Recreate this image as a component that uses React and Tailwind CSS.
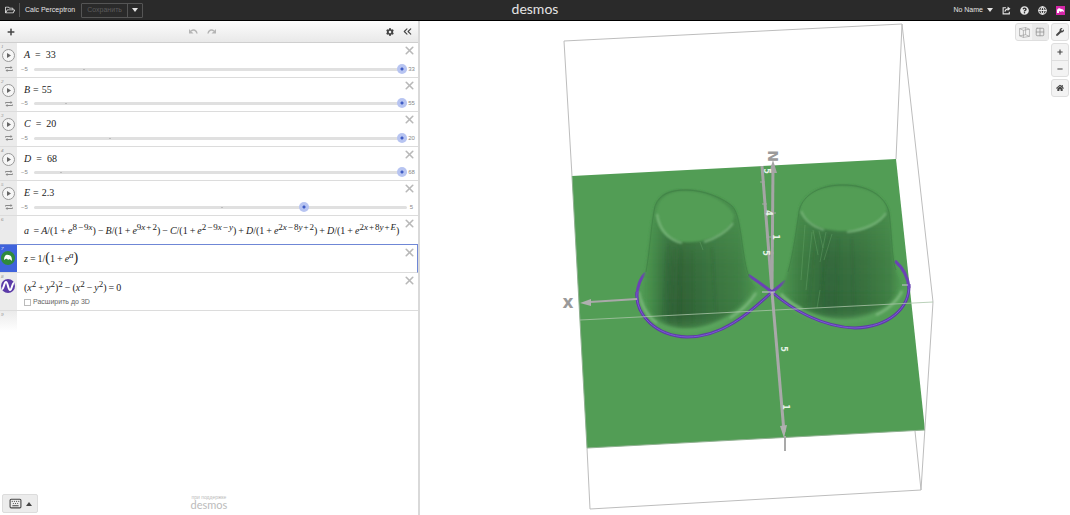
import React, { useState } from 'react';
import { ChevronsLeft, Globe, Grid2x2, Keyboard, X } from 'lucide-react';
import { FaCog, FaHome, FaMinus, FaPlus, FaQuestionCircle, FaRegFolderOpen, FaWrench } from 'react-icons/fa';

const sliders = [
  { name: 'A', value: 33, max: 33, wide: true },
  { name: 'B', value: 55, max: 55, wide: false },
  { name: 'C', value: 20, max: 20, wide: true },
  { name: 'D', value: 68, max: 68, wide: true },
  { name: 'E', value: 2.3, max: 5, wide: false },
];

// Math helpers
const Op = ({ children }) => <span className="mx-[2px]">{children}</span>;
const SOp = ({ children }) => <span className="mx-px">{children}</span>;
const Sup = ({ children }) => <span className="relative -top-1 text-[9px]">{children}</span>;

function Caret({ up = false }) {
  return (
    <svg viewBox="0 0 6 4" className="w-[6px] h-1" fill="currentColor">
      <path d={up ? 'M0 4L3 0L6 4Z' : 'M0 0H6L3 4Z'} />
    </svg>
  );
}

function Header() {
  return (
    <header className="h-[21px] shrink-0 bg-[#2a2a2a] border-b border-black text-[#e4e4e4] text-[7px] grid grid-cols-3 items-center">
      <div className="flex items-center pl-[5px]">
        <button aria-label="Open"><FaRegFolderOpen size={10} /></button>
        <span className="w-px h-[14px] bg-[#555] ml-1 mr-[5px]" />
        <h1 className="whitespace-nowrap">Calc Perceptron</h1>
        <div className="flex h-[15px] ml-[6px] border border-[#555] rounded-[1px]">
          <button className="px-[5px] text-[#5c5c5c] border-r border-[#555]">Сохранить</button>
          <button className="w-[14px] flex items-center justify-center" aria-label="Save options"><Caret /></button>
        </div>
      </div>
      <a href="#" className="justify-self-center text-[14px] leading-none font-['Lato',sans-serif] pb-[2px]">desmos</a>
      <div className="flex items-center justify-end gap-[9px] pr-[5px]">
        <button className="flex items-center gap-1">No Name <Caret /></button>
        <button aria-label="Share">
          <svg viewBox="0 0 16 16" className="w-[9px] h-[9px]" fill="none" stroke="currentColor" strokeWidth="2">
            <path d="M7 3H2V14H13V10M5 10C6 7 8 5 12 5" />
            <path d="M10 1L15 5L10 9Z" fill="currentColor" stroke="none" />
          </svg>
        </button>
        <button aria-label="Help"><FaQuestionCircle size={9} /></button>
        <button aria-label="Language"><Globe size={9} strokeWidth={3} /></button>
        <button aria-label="Account" className="w-[9px] h-[9px] bg-[#d427a8]">
          <svg viewBox="0 0 9 9" className="w-[9px] h-[9px]">
            <path d="M1 7V4C2 2 4 2 5 3C7 3 8 4 8 6L6 5L5 6L3 5V7Z" fill="#fff" />
          </svg>
        </button>
      </div>
    </header>
  );
}

function Toolbar() {
  return (
    <div className="h-[22px] shrink-0 flex items-center justify-between bg-gradient-to-b from-[#fcfcfc] to-[#e9e9e9] border-b border-[#cfcfcf] pl-[7px] pr-1 text-[#444]">
      <button aria-label="Add item" className="w-3"><FaPlus size={8} /></button>
      <div className="flex gap-[9px] text-[#b5b5b5]">
        <button aria-label="Undo">
          <svg viewBox="0 0 18 14" className="w-[9px] h-[7px]" fill="none" stroke="currentColor" strokeWidth="3">
            <path d="M4 6C9 2 15 4 16 11" /><path d="M0 2V11H9Z" fill="currentColor" stroke="none" />
          </svg>
        </button>
        <button aria-label="Redo">
          <svg viewBox="0 0 18 14" className="w-[9px] h-[7px]" fill="none" stroke="currentColor" strokeWidth="3">
            <path d="M14 6C9 2 3 4 2 11" /><path d="M18 2V11H9Z" fill="currentColor" stroke="none" />
          </svg>
        </button>
      </div>
      <div className="flex items-center gap-[7px]">
        <button aria-label="Settings"><FaCog size={8} /></button>
        <button aria-label="Hide list"><ChevronsLeft size={13} strokeWidth={2} /></button>
      </div>
    </div>
  );
}

function Gutter({ index, className = 'bg-[#ebebeb] text-[#888]', children }) {
  return (
    <div className={`w-[17px] shrink-0 flex flex-col ${className}`}>
      <span className="pl-px pt-px text-[5px] leading-[5px] italic">{index}</span>
      {children}
    </div>
  );
}

function CloseButton() {
  return (
    <button aria-label="Delete" className="shrink-0 self-start pt-px text-[#b8b8b8]">
      <X size={13} strokeWidth={3} />
    </button>
  );
}

function SliderRow({ index, name, value: initial, max, wide }) {
  const [value, setValue] = useState(initial);
  const zero = (5 / (max + 5)) * 100;
  return (
    <li className="flex border-b border-[#dcdcdc]">
      <Gutter index={index}>
        <button aria-label={`Play ${name}`} className="w-[13px] h-[13px] ml-[2px] rounded-full border border-[#999] bg-[#f6f6f6] flex items-center justify-center text-[#666]">
          <svg viewBox="0 0 5 5" className="w-[5px] h-[5px]" fill="currentColor"><path d="M1 0L5 2.5L1 5Z" /></svg>
        </button>
        <svg viewBox="0 0 16 12" className="w-2 h-[6px] ml-[5px] mt-1 text-[#8a8a8a]" fill="none" stroke="currentColor" strokeWidth="2">
          <path d="M1 5V3H12M15 7V9H4" />
          <path d="M11 0L15 3L11 6ZM5 6L1 9L5 12Z" fill="currentColor" stroke="none" />
        </svg>
      </Gutter>
      <div className="flex-1 pl-1 pr-[2px]">
        <div className="flex justify-between h-5">
          <label htmlFor={`slider-${name}`} className={`pl-[3px] pt-1 leading-4 flex ${wide ? 'gap-[5px]' : 'gap-[3px]'}`}>
            <i>{name}</i><span>=</span><span>{value}</span>
          </label>
          <CloseButton />
        </div>
        <div className="flex items-center h-3 text-[6px] text-[#888] font-['Liberation_Sans',sans-serif]">
          <span className="w-[13px]">−5</span>
          <div className="relative flex-1 flex items-center">
            <input
              id={`slider-${name}`}
              type="range"
              min={-5}
              max={max}
              step={0.1}
              value={value}
              onChange={(e) => setValue(Number(e.target.value))}
              className="w-full h-[10px] appearance-none bg-transparent [&::-webkit-slider-runnable-track]:h-[3px] [&::-webkit-slider-runnable-track]:rounded-full [&::-webkit-slider-runnable-track]:bg-[#e0e0e0] [&::-webkit-slider-thumb]:appearance-none [&::-webkit-slider-thumb]:w-[10px] [&::-webkit-slider-thumb]:h-[10px] [&::-webkit-slider-thumb]:-mt-1 [&::-webkit-slider-thumb]:rounded-full [&::-webkit-slider-thumb]:bg-[radial-gradient(circle,#3f5cc4_0px,#3f5cc4_1px,#b7c4f1_2px)]"
            />
            <span className="absolute w-[2px] h-px bg-[#bdbdbd]" style={{ left: `${zero}%` }} />
          </div>
          <span className="w-[9px] text-center">{max}</span>
        </div>
      </div>
    </li>
  );
}

function Sidebar() {
  return (
    <aside className="w-[420px] shrink-0 flex flex-col bg-white border-r-2 border-[#d9d9d9]">
      <Toolbar />
      <div className="flex-1 flex flex-col text-[10px] text-[#222] font-['Liberation_Serif',serif]">
        <ul className="grid grid-rows-5 h-[173px]">
          {sliders.map((s, i) => <SliderRow key={s.name} index={i + 1} {...s} />)}
        </ul>
        <ul>
          <li className="h-7 flex justify-between pr-[2px]">
            <Gutter index={6} />
            <div className="flex-1 min-w-0 pl-[7px] pt-[7px] leading-4 whitespace-nowrap">
              <i>a</i> <Op>=</Op><i>A</i>/(1<Op>+</Op><i>e</i><Sup>8<SOp>−</SOp>9<i>x</i></Sup>)<Op>−</Op>
              <i>B</i>/(1<Op>+</Op><i>e</i><Sup>9<i>x</i><SOp>+</SOp>2</Sup>)<Op>−</Op>
              <i>C</i>/(1<Op>+</Op><i>e</i><Sup>2<SOp>−</SOp>9<i>x</i><SOp>−</SOp><i>y</i></Sup>)<Op>+</Op>
              <i>D</i>/(1<Op>+</Op><i>e</i><Sup>2<i>x</i><SOp>−</SOp>8<i>y</i><SOp>+</SOp>2</Sup>)<Op>+</Op>
              <i>D</i>/(1<Op>+</Op><i>e</i><Sup>2<i>x</i><SOp>+</SOp>8<i>y</i><SOp>+</SOp><i>E</i></Sup>)
            </div>
            <CloseButton />
          </li>
          <li className="h-[29px] flex border border-l-0 border-b-[#dcdcdc] border-t-[#6f87d6] border-r-[#6f87d6] pr-px">
            <Gutter index={7} className="bg-[#3f63dc] text-white">
              <svg viewBox="0 0 14 14" className="w-[14px] h-[14px] ml-px" fill="none">
                <circle cx="7" cy="7" r="7" fill="#2f8a3c" />
                <path d="M3 9C3 5 5 3 7 4C10 4 11 6 11 10C9 8 8 8 7 9C6 7 5 8 3 9Z" fill="#fff" />
              </svg>
            </Gutter>
            <div className="flex-1 pl-[7px] pt-[6px] leading-4">
              <i>z</i><Op>=</Op>1/<span className="text-[14px] leading-none">(</span>1<Op>+</Op><i>e</i><Sup><i>a</i></Sup><span className="text-[14px] leading-none">)</span>
            </div>
            <CloseButton />
          </li>
          <li className="h-[38px] flex border-b border-[#dcdcdc] pr-[2px]">
            <Gutter index={8}>
              <svg viewBox="0 0 14 14" className="w-[14px] h-[14px] ml-px">
                <circle cx="7" cy="7" r="7" fill="#5b3aa8" />
                <path d="M1 10C3 10 3 3 5 3C7 3 7 11 9 11C11 11 11 4 13 4" fill="none" stroke="#fff" strokeWidth="2" />
              </svg>
            </Gutter>
            <div className="flex-1 pl-[7px] pt-[7px]">
              <div className="leading-4">
                (<i>x</i><Sup>2</Sup><Op>+</Op><i>y</i><Sup>2</Sup>)<Sup>2</Sup><Op>−</Op>(<i>x</i><Sup>2</Sup><Op>−</Op><i>y</i><Sup>2</Sup>)<Op>=</Op>0
              </div>
              <label className="flex items-center gap-[2px] h-3 text-[7px] text-[#666] font-['Liberation_Sans',sans-serif]">
                <input type="checkbox" className="appearance-none w-[7px] h-[7px] border border-[#bbb] bg-white" />
                Расширить до 3D
              </label>
            </div>
            <CloseButton />
          </li>
          <li className="h-5 flex">
            <Gutter index={9} className="bg-gradient-to-b from-[#ebebeb] to-white text-[#888]" />
          </li>
        </ul>
        <footer className="mt-auto h-[21px] grid grid-cols-3 items-start font-['Liberation_Sans',sans-serif]">
          <button aria-label="Keyboard" className="ml-[2px] w-9 h-[19px] flex items-center justify-center gap-1 bg-[#ececec] border border-[#dcdcdc] rounded-[2px] text-[#444]">
            <Keyboard size={13} strokeWidth={2} /><Caret up />
          </button>
          <a href="#" className="justify-self-center text-center text-[5px] leading-[6px] text-[#bbb]">
            при поддержке
            <span className="block text-[11px] leading-[9px] font-['Lato',sans-serif]">desmos</span>
          </a>
        </footer>
      </div>
    </aside>
  );
}

// Thin streaks on the hill sides: [x1, y1, x2, y2]
const darkStreaks = [
  [668, 245, 664, 318], [674, 248, 670, 322], [681, 250, 679, 322], [692, 252, 692, 322], [712, 248, 716, 312],
  [816, 234, 808, 304], [822, 236, 823, 308], [829, 236, 819, 306], [838, 238, 836, 312], [852, 238, 854, 310],
];
const lightStreaks = [
  [813, 230, 818, 255], [819, 231, 823, 248], [826, 232, 820, 262], [820, 290, 817, 308], [832, 234, 824, 260], [700, 242, 703, 250], [805, 225, 801, 280], [812, 232, 806, 290],
];

const leftHill = 'M643 282C648 256 650 225 655 206C660 193 672 190 686 190C705 190 724 199 732 206C737 211 739 222 741 235C744 256 746 270 750 278C754 285 757 287 757 290C750 302 736 315 715 323C695 331 668 331 653 319C644 311 639 298 641 288Z';
const rightHill = 'M779 290C788 280 793 250 799 212C801 198 816 185 843 185C868 185 885 196 889 212C892 235 892 262 897 273C900 280 902 284 902 288C899 299 888 309 872 315C858 321 835 321 820 316C802 310 786 302 779 292Z';
const frontCurve = 'M637 292C635 314 655 336 687 337C722 337 748 314 772 292C791 309 822 327 855 328C888 327 910 309 909 284';

function Surface() {
  return (
    <svg viewBox="420 21 650 494" preserveAspectRatio="xMidYMid meet" className="w-full h-full" fill="none">
      <defs>
        <linearGradient id="hillLeft" x1="0" x2="1" y1="0" y2="0">
          <stop offset="0" stopColor="#529d55" />
          <stop offset="0.1" stopColor="#458a49" />
          <stop offset="0.24" stopColor="#32663a" />
          <stop offset="0.34" stopColor="#2f6035" />
          <stop offset="0.6" stopColor="#38703e" />
          <stop offset="0.85" stopColor="#3f7d44" />
          <stop offset="1" stopColor="#4c944f" />
        </linearGradient>
        <linearGradient id="hillRight" x1="0" x2="1" y1="0" y2="0">
          <stop offset="0" stopColor="#4f9952" />
          <stop offset="0.17" stopColor="#3d7b42" />
          <stop offset="0.4" stopColor="#31643a" />
          <stop offset="0.68" stopColor="#376e3d" />
          <stop offset="0.9" stopColor="#407f45" />
          <stop offset="1" stopColor="#509b53" />
        </linearGradient>
        <linearGradient id="topFade" x1="0" x2="0" y1="0" y2="1">
          <stop offset="0" stopColor="#529d55" stopOpacity="0.7" />
          <stop offset="0.55" stopColor="#529d55" stopOpacity="0.1" />
          <stop offset="0.9" stopColor="#529d55" stopOpacity="0" />
          <stop offset="1" stopColor="#529d55" stopOpacity="0.4" />
        </linearGradient>
        <filter id="soft" x="-10%" y="-10%" width="120%" height="120%"><feGaussianBlur stdDeviation="1" /></filter>
        <filter id="softer" x="-10%" y="-10%" width="120%" height="120%"><feGaussianBlur stdDeviation="2" /></filter>
      </defs>

      <path d="M572 176L896 159L925 430L587 448Z" fill="#529d55" />

      {/* bounding box */}
      <g stroke="#bdbdbd">
        <path d="M572 176L564 41L902 24L896 159M902 24L933 302L921 490L590 509L587 448M915 431L921 490" />
        <path d="M572 176L587 448L925 430" stroke="#8fb090" />
      </g>

      {/* z axis and the far half of the y axis */}
      <g stroke="#a5a5a5">
        <path d="M762 166L772 292" strokeWidth="3" />
        <path d="M773 165L772 292" strokeWidth="3" />
        <path d="M760 182H765M762 204H767M764 213H776M766 237H776M768 253H774" strokeWidth="1" />
      </g>
      <path d="M773 160L777 173H769Z" fill="#a5a5a5" />

      {/* curve behind the hills */}
      <path d="M772 292C764 286 756 280 748 275M646 273C640 278 637 288 637 296M895 261C902 267 908 277 909 288M772 292C777 288 782 284 786 281" stroke="#6b42b5" strokeWidth="3" />

      {/* left hill */}
      <path d={leftHill} fill="url(#hillLeft)" filter="url(#soft)" />
      <path d={leftHill} fill="url(#topFade)" filter="url(#soft)" />
      <path d="M656 214C657 198 668 190 687 191C710 191 732 206 734 216C733 229 715 241 692 242C670 244 657 231 656 214Z" fill="#529d55" filter="url(#soft)" />
      <path d="M646 272C650 250 651 225 655 206C660 193 672 190 686 190C705 190 724 199 732 206C737 211 739 222 741 235C744 256 746 270 749 276" stroke="#3f8045" strokeWidth="1" opacity="0.7" />
      <path d="M657 214C659 229 668 240 682 243M704 242C715 239 728 231 733 223" stroke="#83bd85" strokeWidth="2" opacity="0.8" filter="url(#soft)" />
      <path d="M640 300C647 322 664 331 690 331C718 329 745 310 757 291" stroke="#5ea761" strokeWidth="4" filter="url(#softer)" />
      <path d="M639 292C642 308 648 317 657 323M730 318C742 311 751 301 756 293" stroke="#86bd87" strokeWidth="2" opacity="0.8" filter="url(#soft)" />

      {/* right hill */}
      <path d={rightHill} fill="url(#hillRight)" filter="url(#soft)" />
      <path d={rightHill} fill="url(#topFade)" filter="url(#soft)" />
      <path d="M800 209C803 194 819 186 843 186C868 186 885 197 887 209C884 223 864 232 842 231C820 231 803 222 800 209Z" fill="#529d55" filter="url(#soft)" />
      <path d="M788 272C793 255 796 232 799 212C801 198 816 185 843 185C868 185 885 196 889 212C892 235 892 262 896 270" stroke="#3f8045" strokeWidth="1" opacity="0.7" />
      <path d="M801 211C805 221 814 227 824 230M847 232C865 230 880 223 886 213" stroke="#83bd85" strokeWidth="2" opacity="0.8" filter="url(#soft)" />
      <path d="M779 293C795 312 818 321 843 321C872 320 896 307 903 290" stroke="#5ea761" strokeWidth="4" filter="url(#softer)" />
      <path d="M781 294C786 300 794 305 802 309M876 315C888 310 898 300 902 291" stroke="#86bd87" strokeWidth="2" opacity="0.8" filter="url(#soft)" />

      <g filter="url(#soft)" strokeWidth="2">
        {darkStreaks.map(([x1, y1, x2, y2]) => <path key={`${x1}-${y1}`} d={`M${x1} ${y1}L${x2} ${y2}`} stroke="#2a5a30" opacity="0.25" />)}
      </g>
      <g strokeWidth="1">
        {lightStreaks.map(([x1, y1, x2, y2]) => <path key={`${x1}-${y1}`} d={`M${x1} ${y1}L${x2} ${y2}`} stroke="#6fae73" opacity="0.35" />)}
      </g>

      {/* curve in front */}
      <path d={frontCurve} stroke="#5f3aa8" strokeWidth="3" />
      <path d={frontCurve} stroke="#7b5bd6" strokeWidth="1" />

      {/* near axes */}
      <path d="M580 320L933 302" stroke="#a9c4a8" opacity="0.8" />
      <g stroke="#a9a9a9">
        <path d="M772 292L784 432" strokeWidth="3" />
        <path d="M785 436V451" strokeWidth="2" />
        <path d="M637 299L590 302" strokeWidth="2" />
        <path d="M762 292H775M902 285H908" strokeWidth="1" stroke="#c9c2d6" />
      </g>
      <path d="M780 426L787 425L784 438Z" fill="#b0b0b0" />
      <path d="M580 303L591 299V306Z" fill="#b0b0b0" />

      {/* tick labels */}
      <g fill="#e6f3e6" fontFamily="DejaVu Sans" fontWeight="700" fontSize="8" textAnchor="middle">
        <text transform="translate(764 171) rotate(90)">5</text>
        <text transform="translate(766 213) rotate(90)">4</text>
        <text transform="translate(773 237) rotate(90)">1</text>
        <text transform="translate(763 253) rotate(90)">5</text>
        <text transform="translate(781 349) rotate(90)">5</text>
        <text transform="translate(783 407) rotate(90)">1</text>
      </g>
      <g fill="#9a9a9a" fontFamily="DejaVu Sans" fontWeight="700" textAnchor="middle">
        <text transform="translate(768 156) rotate(90)" fontSize="14">N</text>
        <text x="568" y="308" fontSize="17">x</text>
      </g>
    </svg>
  );
}

function GraphTools() {
  const box = 'bg-[#f3f3f3] border border-[#dedede] rounded-[3px] text-[#444] flex';
  const btn = 'w-4 h-4 flex items-center justify-center';
  return (
    <div className="absolute top-[2px] right-px flex items-start gap-[2px]">
      <div className={box}>
        <button aria-label="Bounding box" className={btn}>
          <svg viewBox="0 0 20 20" className="w-[11px] h-[11px]" fill="none" stroke="#8c8c8c" strokeWidth="1">
            <path d="M1 3L12 1L19 4V17L8 19L1 16ZM1 3L8 6L19 4M8 6V19M12 1V14L1 16M12 14L19 17" />
          </svg>
        </button>
        <button aria-label="Grid" className={`${btn} bg-[#eaeaea] text-[#999]`}><Grid2x2 size={10} strokeWidth={2} /></button>
      </div>
      <div className="flex flex-col gap-[2px]">
        <div className={box}><button aria-label="Settings" className={btn}><FaWrench size={8} /></button></div>
        <div className={`${box} flex-col`}>
          <button aria-label="Zoom in" className={btn}><FaPlus size={6} /></button>
          <button aria-label="Zoom out" className={`${btn} border-t border-[#dedede]`}><FaMinus size={6} /></button>
        </div>
        <div className={box}><button aria-label="Default view" className={btn}><FaHome size={8} /></button></div>
      </div>
    </div>
  );
}

export default function App() {
  return (
    <div className="h-screen flex flex-col bg-white font-['Liberation_Sans',sans-serif]">
      <Header />
      <div className="flex-1 min-h-0 flex">
        <Sidebar />
        <main className="relative flex-1 min-w-0">
          <Surface />
          <GraphTools />
        </main>
      </div>
    </div>
  );
}
